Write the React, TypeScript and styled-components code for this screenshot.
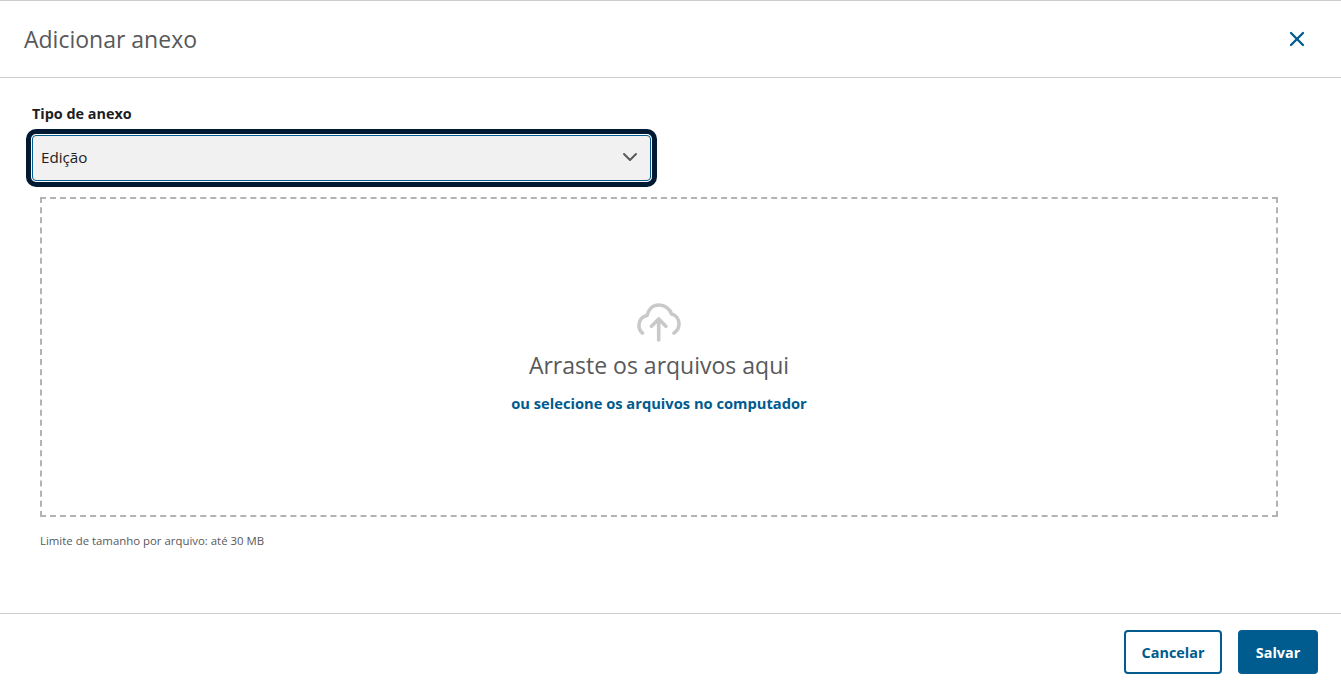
import styled, { createGlobalStyle } from 'styled-components';
import { ChevronDown, X } from 'lucide-react';

const GlobalStyle = createGlobalStyle`
  html, body {
    margin: 0;
    padding: 0;
    background: #fff;
  }

  body {
    font-family: 'Open Sans', 'Noto Sans', sans-serif;
  }
`;

const Dialog = styled.div`
  width: 1341px;
  height: 689px;
  display: flex;
  flex-direction: column;
  box-sizing: border-box;
  border-top: 1px solid #ccc;
  overflow: hidden;
`;

const Header = styled.header`
  height: 77px;
  flex: none;
  box-sizing: border-box;
  display: flex;
  align-items: center;
  justify-content: space-between;
  padding: 0 32px 1px 24px;
  border-bottom: 1px solid #ccc;
`;

const Title = styled.h1`
  margin: 0;
  font-size: 23px;
  line-height: 32px;
  font-weight: 400;
  color: #58595b;
`;

const CloseButton = styled.button`
  width: 24px;
  height: 24px;
  display: flex;
  align-items: center;
  justify-content: center;
  padding: 0;
  border: 0;
  background: none;
  color: #005b8e;
`;

const Body = styled.main`
  flex: 1;
  display: flex;
  flex-direction: column;
  padding: 26px 63px 0 32px;
`;

const Label = styled.label`
  font-size: 14.4px;
  line-height: 20px;
  font-weight: 700;
  color: #1d1d1d;
  margin-bottom: 11px;
`;

const Select = styled.div`
  width: 619px;
  height: 46px;
  flex: none;
  box-sizing: border-box;
  display: flex;
  align-items: center;
  justify-content: space-between;
  padding: 0 8px 2px 8px;
  border: 1px solid #005b8e;
  border-radius: 4px;
  background: #f1f1f1;
  outline: 5px solid #001a33;
  outline-offset: 1px;
  font-size: 15.2px;
  color: #1d1d1d;
`;

const ChevronIcon = styled(ChevronDown)`
  color: #58595b;
`;

const DropZone = styled.div`
  margin: 16px 0 0 8px;
  height: 320px;
  flex: none;
  box-sizing: border-box;
  display: flex;
  flex-direction: column;
  align-items: center;
  padding-top: 104px;
  border: 2px dashed #b3b3b3;
`;

const CloudIcon = styled.svg`
  width: 44px;
  height: 39px;
  color: #c9c9c9;
`;

const DropTitle = styled.p`
  margin: 6px 0 0;
  font-size: 23px;
  line-height: 34px;
  color: #58595b;
`;

const SelectLink = styled.a`
  margin-top: 11px;
  font-size: 14.7px;
  line-height: 20px;
  font-weight: 700;
  color: #005b8e;
`;

const Hint = styled.p`
  margin: 16px 0 0 8px;
  font-size: 11.4px;
  line-height: 16px;
  color: #58595b;
`;

const Footer = styled.footer`
  height: 76px;
  flex: none;
  box-sizing: border-box;
  display: flex;
  justify-content: flex-end;
  align-items: flex-start;
  gap: 16px;
  padding: 16px 23px 0 0;
  border-top: 1px solid #ccc;
`;

const Button = styled.button<{ $primary?: boolean }>`
  height: 44px;
  width: ${p => (p.$primary ? '80px' : '98px')};
  box-sizing: border-box;
  border: 2px solid #005b8e;
  border-radius: 4px;
  background: ${p => (p.$primary ? '#005b8e' : '#fff')};
  color: ${p => (p.$primary ? '#fff' : '#005b8e')};
  font-family: inherit;
  font-size: 14.4px;
  font-weight: 700;
`;

const App = () => (
  <Dialog>
    <GlobalStyle />
    <Header>
      <Title>Adicionar anexo</Title>
      <CloseButton aria-label="Fechar">
        <X size={30} strokeWidth={2.3} />
      </CloseButton>
    </Header>
    <Body>
      <Label>Tipo de anexo</Label>
      <Select>
        Edição
        <ChevronIcon size={24} strokeWidth={2} />
      </Select>
      <DropZone>
        <CloudIcon viewBox="0 0 44 39" fill="none" stroke="currentColor" strokeWidth="3.6" strokeLinecap="round" strokeLinejoin="round">
          <path d="M5.5 30C2.8 28 1.8 24.5 2 21.5C2.3 16.5 5.5 13.5 10 12.5C11.5 6 16 2 22 2C28 2 33 6 34.5 11C39 12 42 16 42 21C42 25 40 28 37 30" />
          <path d="M21.7 37V16.5M14.5 23.3L21.7 16L28.9 23.3" />
        </CloudIcon>
        <DropTitle>Arraste os arquivos aqui</DropTitle>
        <SelectLink>ou selecione os arquivos no computador</SelectLink>
      </DropZone>
      <Hint>Limite de tamanho por arquivo: até 30 MB</Hint>
    </Body>
    <Footer>
      <Button>Cancelar</Button>
      <Button $primary>Salvar</Button>
    </Footer>
  </Dialog>
);

export default App;
